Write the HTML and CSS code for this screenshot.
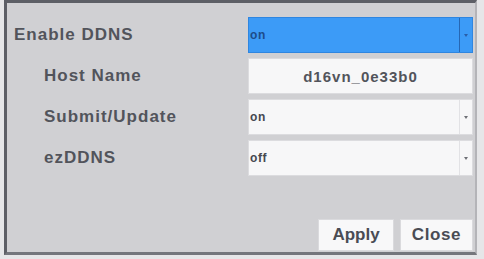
FILE: index.html
```html
<!DOCTYPE html>
<html>
<head>
<meta charset="utf-8">
<link rel="stylesheet" href="styles.css">
</head>
<body>
<div class="frame">
  <div class="form">
    <div class="row">
      <div class="label top">Enable DDNS</div>
      <div class="select active"><span class="val">on</span><span class="arrow"><i></i></span></div>
    </div>
    <div class="row">
      <div class="label">Host Name</div>
      <div class="input">d16vn_0e33b0</div>
    </div>
    <div class="row">
      <div class="label">Submit/Update</div>
      <div class="select"><span class="val">on</span><span class="arrow"><i></i></span></div>
    </div>
    <div class="row">
      <div class="label">ezDDNS</div>
      <div class="select"><span class="val">off</span><span class="arrow"><i></i></span></div>
    </div>
  </div>
  <div class="actions">
    <div class="btn apply">Apply</div>
    <div class="btn close">Close</div>
  </div>
</div>
</body>
</html>
```
FILE: styles.css
```css
html, body {
  margin: 0;
  padding: 0;
  background: #e6e6e8;
}
body {
  font-family: "Liberation Sans", Arial, sans-serif;
  width: 484px;
  height: 259px;
  overflow: hidden;
}
.frame {
  margin-left: 4px;
  width: 468px;
  height: 249px;
  background: #d0d0d3;
  border-top: 3px solid #5d5f66;
  border-left: 3px solid #5d5f66;
  border-bottom: 3px solid #74767c;
  border-right: 2px solid #b4b4b8;
  display: flex;
  flex-direction: column;
  box-sizing: content-box;
}
.form {
  padding-top: 14px;
  display: flex;
  flex-direction: column;
  gap: 5px;
}
.row {
  display: grid;
  grid-template-columns: 241px 225px;
  height: 36px;
  align-items: center;
}
.label {
  font-weight: bold;
  font-size: 17px;
  letter-spacing: 1px;
  color: #52545b;
  padding-left: 37px;
}
.label.top {
  padding-left: 7px;
}
.select, .input {
  height: 36px;
  box-sizing: border-box;
  background: #f7f7f8;
  border: 1px solid #dcdcdf;
  display: flex;
  align-items: center;
}
.select .val {
  flex: 1;
  font-size: 12px;
  font-weight: bold;
  letter-spacing: 0.6px;
  color: #46484f;
  padding-left: 1px;
}
.select .arrow {
  width: 12px;
  height: 100%;
  border-left: 1px solid #e2e2e5;
  display: flex;
  align-items: center;
  justify-content: center;
}
.select .arrow i {
  width: 0;
  height: 0;
  border-left: 2px solid transparent;
  border-right: 2px solid transparent;
  border-top: 3px solid #6e7076;
}
.select.active {
  background: #3c9bf7;
  border-color: #2f86e0;
}
.select.active .val {
  color: #1d4c8a;
}
.select.active .arrow {
  border-left: 1px solid #2667b4;
}
.select.active .arrow i {
  border-top-color: #2a5ea8;
}
.input {
  justify-content: center;
  font-size: 15px;
  font-weight: bold;
  letter-spacing: 1px;
  color: #52545b;
}
.actions {
  margin-top: auto;
  margin-bottom: 1px;
  display: flex;
  justify-content: flex-end;
  gap: 6px;
  padding-right: 2px;
}
.btn {
  height: 32px;
  box-sizing: border-box;
  background: #f8f8f9;
  border: 1px solid #dadadd;
  display: flex;
  align-items: center;
  justify-content: center;
  font-weight: bold;
  font-size: 17px;
  color: #4a4c54;
}
.apply { width: 76px; }
.close { width: 73px; letter-spacing: 0.6px; }
```
